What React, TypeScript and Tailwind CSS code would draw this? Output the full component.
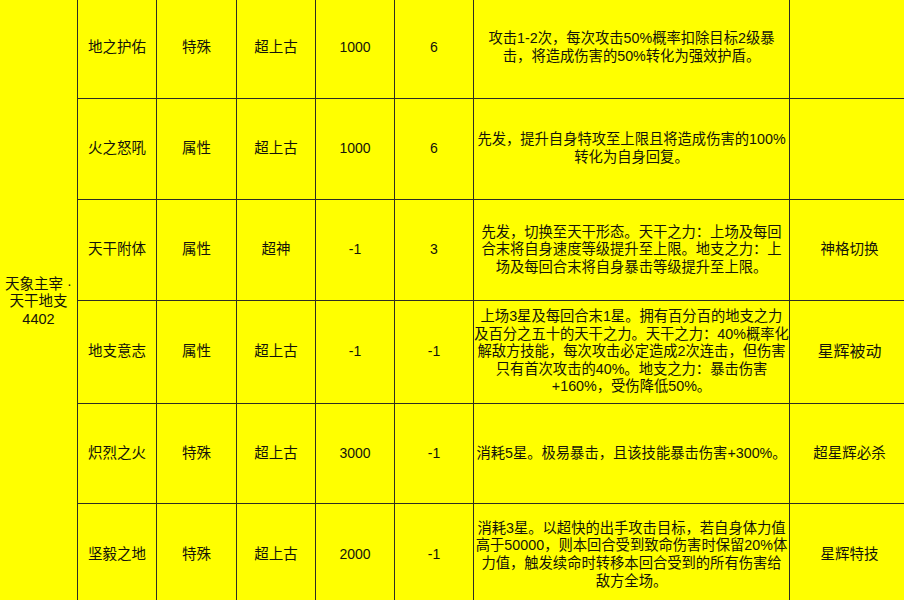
const rows = [
  {
    name: "地之护佑",
    kind: "特殊",
    tier: "超上古",
    power: "1000",
    pp: "6",
    desc: ["攻击1-2次，每次攻击50%概率扣除目标2级暴", "击，将造成伤害的50%转化为强效护盾。"],
    tag: "",
    h: "h-[101px]",
  },
  {
    name: "火之怒吼",
    kind: "属性",
    tier: "超上古",
    power: "1000",
    pp: "6",
    desc: ["先发，提升自身特攻至上限且将造成伤害的100%", "转化为自身回复。"],
    tag: "",
    h: "h-[101px]",
  },
  {
    name: "天干附体",
    kind: "属性",
    tier: "超神",
    power: "-1",
    pp: "3",
    desc: [
      "先发，切换至天干形态。天干之力：上场及每回",
      "合末将自身速度等级提升至上限。地支之力：上",
      "场及每回合末将自身暴击等级提升至上限。",
    ],
    tag: "神格切换",
    h: "h-[101px]",
  },
  {
    name: "地支意志",
    kind: "属性",
    tier: "超上古",
    power: "-1",
    pp: "-1",
    desc: [
      "上场3星及每回合末1星。拥有百分百的地支之力",
      "及百分之五十的天干之力。天干之力：40%概率化",
      "解敌方技能，每次攻击必定造成2次连击，但伤害",
      "只有首次攻击的40%。地支之力：暴击伤害",
      "+160%，受伤降低50%。",
    ],
    tag: "星辉被动",
    big: true,
    h: "h-[103px]",
  },
  {
    name: "炽烈之火",
    kind: "特殊",
    tier: "超上古",
    power: "3000",
    pp: "-1",
    desc: ["消耗5星。极易暴击，且该技能暴击伤害+300%。"],
    tag: "超星辉必杀",
    h: "h-[100px]",
  },
  {
    name: "坚毅之地",
    kind: "特殊",
    tier: "超上古",
    power: "2000",
    pp: "-1",
    desc: [
      "消耗3星。以超快的出手攻击目标，若自身体力值",
      "高于50000，则本回合受到致命伤害时保留20%体",
      "力值，触发续命时转移本回合受到的所有伤害给",
      "敌方全场。",
    ],
    tag: "星辉特技",
    h: "h-[103px]",
  },
]

const cell = "border border-[#2e2e22] text-center align-middle p-0"

export default function App() {
  return (
    <div className="w-[904px] h-[600px] overflow-hidden bg-[#ffff00]">
      <table
        className="-mt-[3px] -ml-px border-collapse table-fixed w-[910px] text-[14px] leading-[17.6px] text-[#14140a]"
        style={{ fontFamily: '"Liberation Sans", "Noto Sans CJK SC", sans-serif' }}
      >
        <colgroup>
          <col className="w-[78px]" />
          <col className="w-[79px]" />
          <col className="w-[80px]" />
          <col className="w-[79px]" />
          <col className="w-[79px]" />
          <col className="w-[79px]" />
          <col className="w-[316px]" />
          <col className="w-[120px]" />
        </colgroup>
        <tbody>
          {rows.map((r, i) => (
            <tr key={i} className={r.h}>
              {i === 0 && (
                <td rowSpan={rows.length} className={`${cell} text-[14.5px]`}>
                  天象主宰 ·
                  <br />
                  天干地支
                  <br />
                  4402
                </td>
              )}
              <td className={`${cell} text-[14.5px]`}>{r.name}</td>
              <td className={`${cell} text-[14.5px]`}>{r.kind}</td>
              <td className={`${cell} text-[14.5px]`}>{r.tier}</td>
              <td className={cell}>{r.power}</td>
              <td className={cell}>{r.pp}</td>
              <td className={`${cell} text-[14.3px]`}>
                {r.desc.map((line, j) => (
                  <div key={j} className="whitespace-nowrap">
                    {line}
                  </div>
                ))}
              </td>
              <td className={`${cell} ${r.big ? "text-[16px]" : "text-[14.5px]"}`}>{r.tag}</td>
            </tr>
          ))}
        </tbody>
      </table>
    </div>
  )
}
